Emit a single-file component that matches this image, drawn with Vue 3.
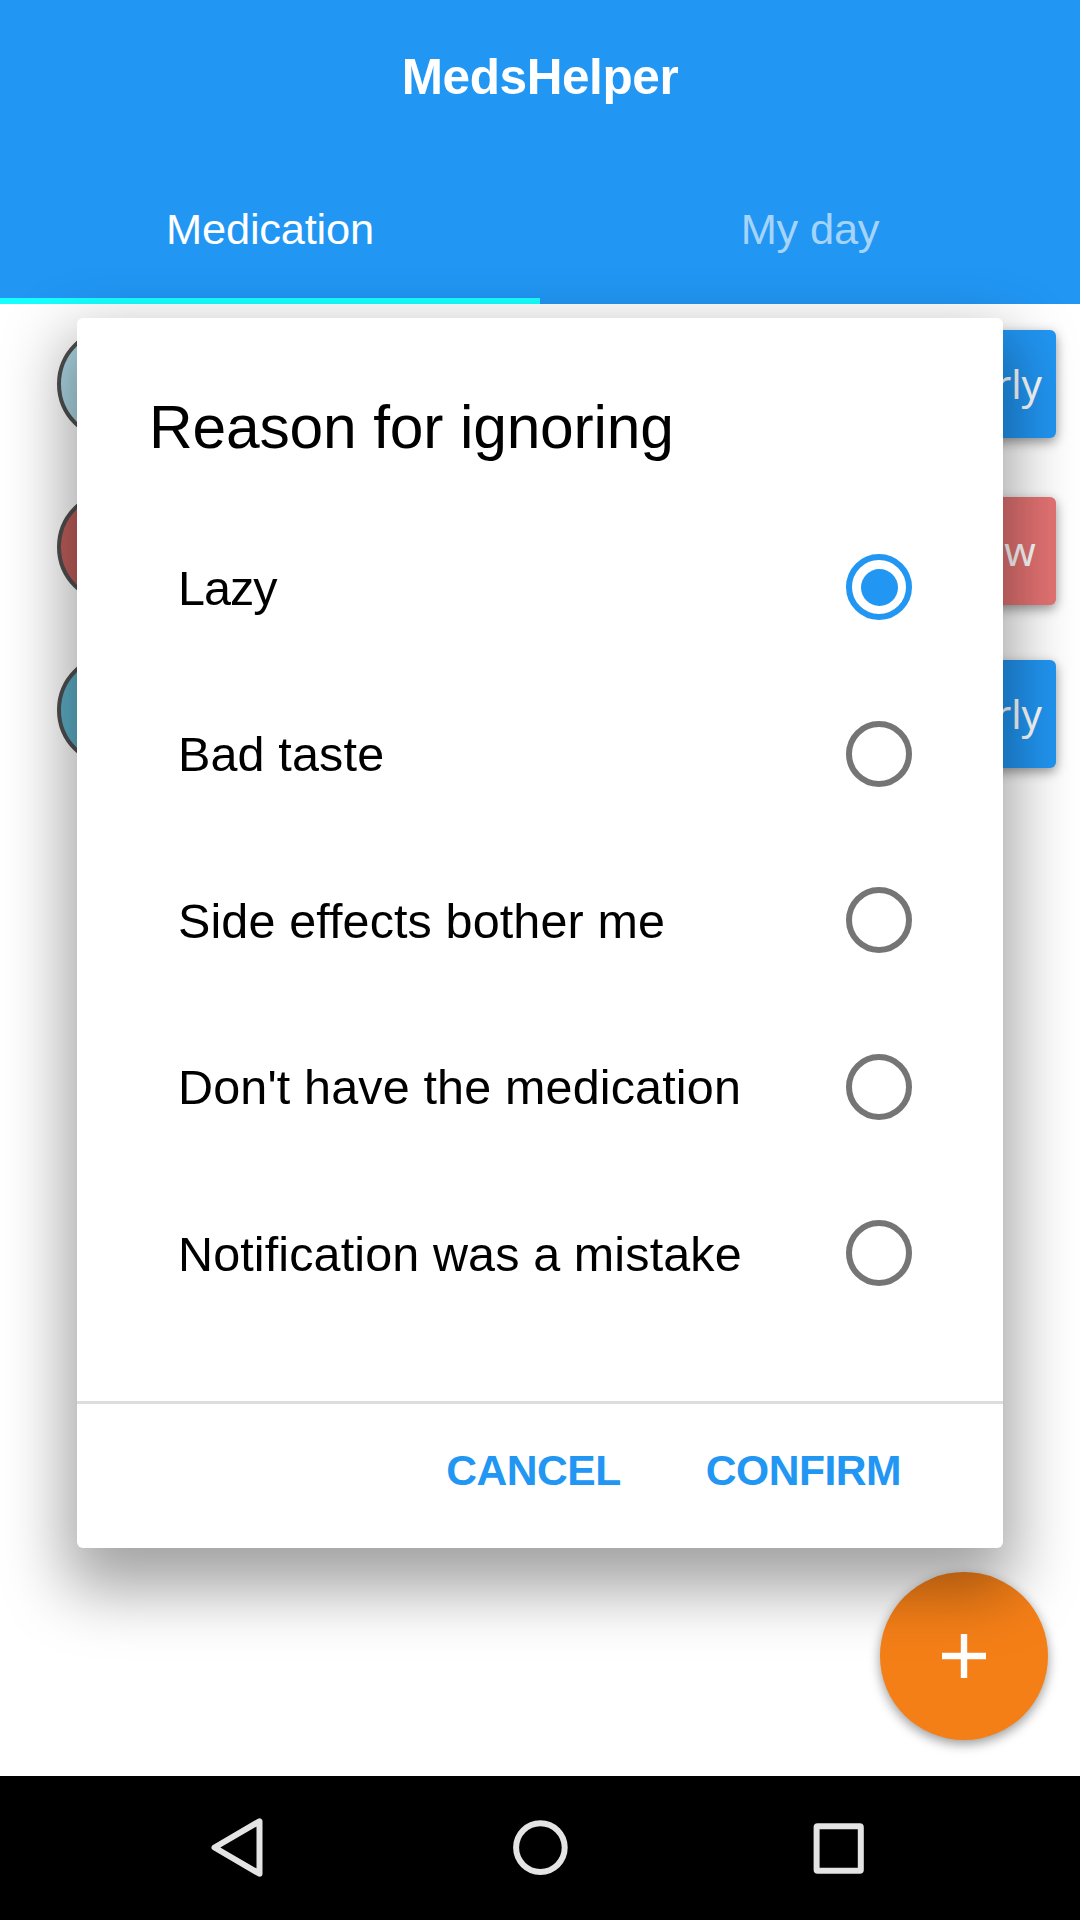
<script setup>
const meds = [
  { label: 'Take early', color: '#add8e6', tone: 'blue' },
  { label: 'Take now', color: '#c15f5c', tone: 'red' },
  { label: 'Take early', color: '#5fb0c9', tone: 'blue' },
]
const reasons = [
  { text: 'Lazy', spacing: -1 },
  { text: 'Bad taste', spacing: 0.15 },
  { text: 'Side effects bother me', spacing: 0.12 },
  { text: "Don't have the medication", spacing: 0.15 },
  { text: 'Notification was a mistake', spacing: 0.12 },
]
const selected = 0
</script>

<template>
  <div class="screen">
    <header class="toolbar">
      <h1 class="app-title">MedsHelper</h1>
      <nav class="tabs">
        <span class="tab active">Medication</span>
        <span class="tab">My day</span>
      </nav>
    </header>

    <main class="content">
      <div v-for="(med, i) in meds" :key="i" class="med-row">
        <span class="pill" :style="{ backgroundColor: med.color }"></span>
        <button class="med-button" :class="med.tone">{{ med.label }}</button>
      </div>
    </main>

    <button class="fab" aria-label="Add">
      <svg width="44" height="44" viewBox="0 0 44 44">
        <path d="M22 0V44M0 22H44" stroke="#fff" stroke-width="6.4" />
      </svg>
    </button>

    <footer class="navbar">
      <svg width="60" height="66" viewBox="0 0 60 66">
        <path d="M52.5 6.3V58.7L7.5 32.5Z" />
      </svg>
      <svg width="60" height="66" viewBox="0 0 60 66">
        <circle cx="32.4" cy="32.6" r="24.3" />
      </svg>
      <svg width="60" height="66" viewBox="0 0 60 66">
        <rect x="7.6" y="11.3" width="44.2" height="44.4" rx="1" />
      </svg>
    </footer>

    <section class="dialog">
      <h2 class="dialog-title">Reason for ignoring</h2>
      <ul class="reasons">
        <li v-for="(r, i) in reasons" :key="i" class="reason">
          <span class="reason-text" :style="{ letterSpacing: r.spacing + 'px' }">{{ r.text }}</span>
          <span class="radio" :class="{ checked: i === selected }"></span>
        </li>
      </ul>
      <div class="actions">
        <button class="action">CANCEL</button>
        <button class="action">CONFIRM</button>
      </div>
    </section>
  </div>
</template>

<style>
body {
  background: #fff;
}
</style>

<style scoped>
* {
  box-sizing: border-box;
  margin: 0;
  padding: 0;
}
.screen {
  position: relative;
  display: flex;
  flex-direction: column;
  width: 1080px;
  height: 1920px;
  overflow: hidden;
  background: #fff;
  font-family: "Liberation Sans", Arial, sans-serif;
}
button {
  border: 0;
  background: none;
  font-family: inherit;
}
.toolbar {
  height: 304px;
  background: #2196f3;
  color: #fff;
}
.app-title {
  height: 152px;
  padding-top: 1px;
  line-height: 152px;
  font-size: 49.5px;
  font-weight: 700;
  letter-spacing: -0.4px;
  text-align: center;
}
.tabs {
  display: flex;
  height: 152px;
}
.tab {
  flex: 1;
  padding-top: 1px;
  line-height: 152px;
  font-size: 43.4px;
  letter-spacing: -0.2px;
  text-align: center;
  color: rgba(255, 255, 255, 0.6);
}
.tab.active {
  color: #fff;
  border-bottom: 6px solid #18ffff;
}
.content {
  flex: 1;
  padding: 24px 24px 0 57px;
}
.med-row {
  display: flex;
  justify-content: space-between;
  height: 163px;
}
.pill {
  width: 114px;
  height: 114px;
  margin-top: -1px;
  border: 4px solid #505050;
  border-radius: 50%;
}
.med-button {
  width: 216px;
  height: 108px;
  margin-top: 2px;
  padding-bottom: 2px;
  border-radius: 6px;
  color: #fff;
  font-family: "Noto Sans", sans-serif;
  font-size: 40px;
  box-shadow: 0 4px 12px rgba(0, 0, 0, 0.4);
}
.med-row:nth-child(n + 2) .med-button {
  margin-top: 6px;
}
.blue {
  background: #2196f3;
}
.red {
  background: #e57373;
}
.fab {
  position: absolute;
  left: 880px;
  top: 1572px;
  display: flex;
  align-items: center;
  justify-content: center;
  width: 168px;
  height: 168px;
  border-radius: 50%;
  background: #f57f17;
  box-shadow: 0 4px 12px rgba(0, 0, 0, 0.4);
}
.navbar {
  display: flex;
  justify-content: space-between;
  height: 144px;
  padding: 39px 211px 0 207px;
  background: #000;
}
.navbar svg {
  fill: none;
  stroke: #e4e4e4;
  stroke-width: 6;
  stroke-linejoin: round;
}
.dialog {
  position: absolute;
  left: 77px;
  top: 318px;
  display: flex;
  flex-direction: column;
  width: 926px;
  height: 1230px;
  border-radius: 6px;
  background: #fff;
  color: #000;
  box-shadow: 0 30px 64px 11px rgba(0, 0, 0, 0.37);
}
.dialog-title {
  padding: 72px 72px 0 72px;
  line-height: 75px;
  font-size: 60.5px;
  font-weight: 400;
  letter-spacing: -0.17px;
}
.reasons {
  flex: 1;
  padding: 39px 91px 0 101px;
  list-style: none;
}
.reason {
  display: flex;
  align-items: center;
  justify-content: space-between;
  height: 166.5px;
}
.reason-text {
  padding-top: 1px;
  font-size: 48.5px;
  line-height: 56px;
}
.radio {
  display: flex;
  align-items: center;
  justify-content: center;
  width: 66px;
  height: 66px;
  border: 6px solid #757575;
  border-radius: 50%;
}
.radio.checked {
  border-color: #2196f3;
}
.radio.checked::before {
  content: "";
  width: 37px;
  height: 37px;
  border-radius: 50%;
  background: #2196f3;
}
.actions {
  display: flex;
  justify-content: flex-end;
  gap: 85px;
  height: 147px;
  padding: 42px 102px 0 0;
  border-top: 3px solid #ddd;
}
.action {
  height: 48px;
  line-height: 48px;
  color: #2196f3;
  font-size: 42.6px;
  font-weight: 700;
  letter-spacing: -0.5px;
}
</style>
